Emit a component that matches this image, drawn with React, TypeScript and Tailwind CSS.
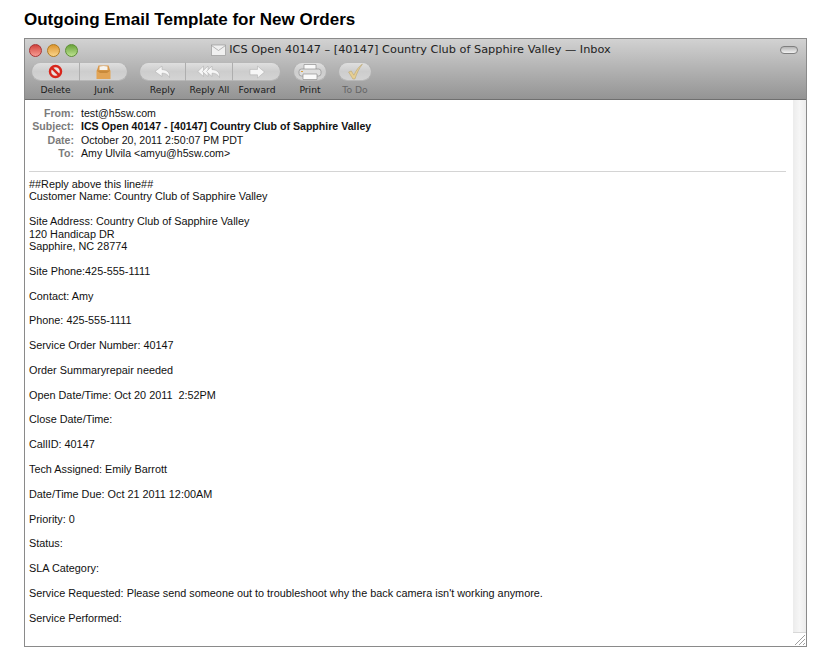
const headers = [
  { label: "From:", value: "test@h5sw.com", bold: false },
  { label: "Subject:", value: "ICS Open 40147 - [40147] Country Club of Sapphire Valley", bold: true },
  { label: "Date:", value: "October 20, 2011 2:50:07 PM PDT", bold: false },
  { label: "To:", value: "Amy Ulvila <amyu@h5sw.com>", bold: false },
];

const body = `##Reply above this line##
Customer Name: Country Club of Sapphire Valley

Site Address: Country Club of Sapphire Valley
120 Handicap DR
Sapphire, NC 28774

Site Phone:425-555-1111

Contact: Amy

Phone: 425-555-1111

Service Order Number: 40147

Order Summaryrepair needed

Open Date/Time: Oct 20 2011  2:52PM

Close Date/Time:

CallID: 40147

Tech Assigned: Emily Barrott

Date/Time Due: Oct 21 2011 12:00AM

Priority: 0

Status:

SLA Category:

Service Requested: Please send someone out to troubleshoot why the back camera isn't working anymore.

Service Performed:`;

function DeleteIcon() {
  return (
    <svg width="15" height="15" viewBox="0 0 16 16">
      <circle cx="8" cy="8" r="5.9" fill="#e9e3e0" stroke="#d8261c" strokeWidth="2.6" />
      <path d="M3.8 3.8l8.4 8.4" stroke="#d8261c" strokeWidth="2.6" />
    </svg>
  );
}

function JunkIcon() {
  return (
    <svg width="17" height="16" viewBox="0 0 17 16">
      <path d="M2 6L3.5 1.5H13.5L15 6V15H2Z" fill="#d9984a" />
      <path d="M4.5 6V2.5C7 1.8 10 1.8 12.5 2.5V6Z" fill="#f5f3ee" />
      <path d="M1.5 6.5h14v8.5h-14z" fill="#e2a455" />
      <path d="M1.5 6.5l3.5 2.5h7l3.5-2.5" fill="#c98a3a" />
    </svg>
  );
}

function ReplyIcon() {
  return (
    <svg width="18" height="14" viewBox="0 0 18 14">
      <path d="M8 1L1 6.5L8 11.5V8.2C11 8 13.8 9.2 15.5 12.5C16.2 7.5 12.8 4.8 8 4.6Z" fill="#f6f6f6" stroke="#a8a8a8" strokeWidth="0.5" />
    </svg>
  );
}

function ReplyAllIcon() {
  return (
    <svg width="24" height="14" viewBox="0 0 24 14">
      <path d="M6.5 1L0.8 6.5L6.5 11.5V1Z" fill="#f6f6f6" stroke="#a8a8a8" strokeWidth="0.5" />
      <path d="M11 1L5.3 6.5L11 11.5V1Z" fill="#f6f6f6" stroke="#a8a8a8" strokeWidth="0.5" />
      <path d="M15 1L9.5 6.5L15 11.5V8.2C18 8 20.8 9.2 22.5 12.5C23.2 7.5 19.8 4.8 15 4.6Z" fill="#f6f6f6" stroke="#a8a8a8" strokeWidth="0.5" />
    </svg>
  );
}

function ForwardIcon() {
  return (
    <svg width="16" height="14" viewBox="0 0 16 14">
      <path d="M8.5 1L15.5 7L8.5 13V9.8H1V4.4H8.5Z" fill="#f6f6f6" stroke="#a8a8a8" strokeWidth="0.5" />
    </svg>
  );
}

function PrintIcon() {
  return (
    <svg width="24" height="16" viewBox="0 0 24 16">
      <path d="M6 0.5h12v5H6z" fill="#fafafa" stroke="#8f8f8f" strokeWidth="0.7" />
      <rect x="1" y="5" width="22" height="7" rx="2.5" fill="#dedede" stroke="#8f8f8f" strokeWidth="0.7" />
      <path d="M5 10h14v5.5H5z" fill="#fafafa" stroke="#8f8f8f" strokeWidth="0.7" />
      <path d="M3 7.5h2" stroke="#d8a040" strokeWidth="1" />
    </svg>
  );
}

function CheckIcon() {
  return (
    <svg width="17" height="17" viewBox="0 0 16 16">
      <path d="M1.5 8.5L4 7.5L6.5 11.5C8.5 7 11 3.5 14.5 1C11.5 5 9 10 7.5 15H5.5Z" fill="#e6cf94" stroke="#b8a168" strokeWidth="0.5" />
    </svg>
  );
}

function Segment({ label, icon, width, dim, divider, shape }: { label: string; icon: any; width: string; dim?: boolean; divider?: boolean; shape: string }) {
  return (
    <div className={`flex flex-col items-center ${width}`}>
      <div
        className={`flex h-[19px] w-full items-center justify-center bg-gradient-to-b from-[#dfdfdf] via-[#cdcdcd] to-[#d4d4d4] border-y border-y-[#b8b8b8] border-x-[#b0b0b0] ${shape} ${divider ? "border-r border-r-[#aeaeae]" : ""}`}
      >
        {icon}
      </div>
      <span className={`mt-[1px] whitespace-nowrap font-['DejaVu_Sans',sans-serif] text-[9.2px] leading-[15px] ${dim ? "text-[#666]" : "text-[#1c1c1c]"}`}>{label}</span>
    </div>
  );
}

export default function App() {
  return (
    <div className="h-[650px] w-[827px] bg-white font-['Liberation_Sans',Arial,sans-serif] text-black">
      <h1 className="pl-6 pt-[10px] text-[17px] font-bold leading-[20px]">Outgoing Email Template for New Orders</h1>

      <div className="ml-6 mt-2 flex h-[609px] w-[783px] flex-col border border-[#8a8a8a]">
        <div className="h-[61px] shrink-0 border-b border-[#6f6f6f] bg-gradient-to-b from-[#d2d2d2] to-[#949494]">
          <div className="flex h-[22px] items-center">
            <div className="ml-[4px] flex gap-[5px]">
              <span className="h-[13px] w-[13px] rounded-full border border-[#a33] bg-gradient-to-b from-[#d0403c] to-[#f69a92]" />
              <span className="h-[13px] w-[13px] rounded-full border border-[#b07a20] bg-gradient-to-b from-[#dc9528] to-[#f9d488]" />
              <span className="h-[13px] w-[13px] rounded-full border border-[#5d8f35] bg-gradient-to-b from-[#6aa338] to-[#bce290]" />
            </div>
            <div className="flex flex-1 items-center justify-center gap-[3px] pr-[36px] font-['DejaVu_Sans',sans-serif] text-[11.3px] text-[#222]">
              <svg width="15" height="12" viewBox="0 0 15 12">
                <rect x="0.5" y="1" width="14" height="10.5" fill="#f0f0f0" stroke="#9a9a9a" strokeWidth="0.7" />
                <path d="M0.5 1.5L7.5 6.5L14.5 1.5" fill="none" stroke="#9a9a9a" strokeWidth="0.7" />
              </svg>
              <span>ICS Open 40147 – [40147] Country Club of Sapphire Valley — Inbox</span>
            </div>
            <span className="mr-2 h-[8px] w-[18px] rounded-full border border-[#7f7f7f] bg-gradient-to-b from-[#b5b5b5] to-[#f2f2f2]" />
          </div>

          <div className="ml-[6px] flex pt-[1px]">
            <div className="flex">
              <Segment label="Delete" icon={<DeleteIcon />} width="w-[49px]" divider shape="rounded-l-full border-l" />
              <Segment label="Junk" icon={<JunkIcon />} width="w-[48px]" shape="rounded-r-full border-r" />
            </div>
            <div className="ml-[11px] flex">
              <Segment label="Reply" icon={<ReplyIcon />} width="w-[47px]" divider shape="rounded-l-full border-l" />
              <Segment label="Reply All" icon={<ReplyAllIcon />} width="w-[47px]" divider shape="" />
              <Segment label="Forward" icon={<ForwardIcon />} width="w-[48px]" shape="rounded-r-full border-r" />
            </div>
            <div className="ml-[12px]">
              <Segment label="Print" icon={<PrintIcon />} width="w-[34px]" shape="rounded-full border-x" />
            </div>
            <div className="ml-[11px]">
              <Segment label="To Do" icon={<CheckIcon />} width="w-[34px]" dim shape="rounded-full border-x" />
            </div>
          </div>
        </div>

        <div className="flex min-h-0 flex-1">
          <div className="min-w-0 flex-1 pl-[4px] pr-[7px] pt-[7px] text-[#111]">
            <div className="border-b border-[#d4d4d4] pb-[10px] text-[10.6px]">
              {headers.map((h) => (
                <div key={h.label} className="flex leading-[13.4px]">
                  <span className="w-[45px] shrink-0 text-right font-bold text-[#7b7b7b]">{h.label}</span>
                  <span className={`ml-[7px] ${h.bold ? "font-bold" : ""}`}>{h.value}</span>
                </div>
              ))}
            </div>
            <div className="whitespace-pre-wrap pt-[6.4px] text-[10.85px] leading-[12.39px]">{body}</div>
          </div>
          <div className="flex w-[13px] shrink-0 flex-col">
            <div className="flex-1 bg-gradient-to-r from-[#ececec] via-[#f6f6f6] to-[#ececec]" />
            <div className="flex h-[14px] items-end justify-end border-t border-[#d8d8d8] bg-white">
              <svg width="12" height="12" viewBox="0 0 12 12">
                <path d="M1 11L11 1M5 11L11 5M9 11L11 9" stroke="#a0a0a0" strokeWidth="1" />
              </svg>
            </div>
          </div>
        </div>
      </div>
    </div>
  );
}
